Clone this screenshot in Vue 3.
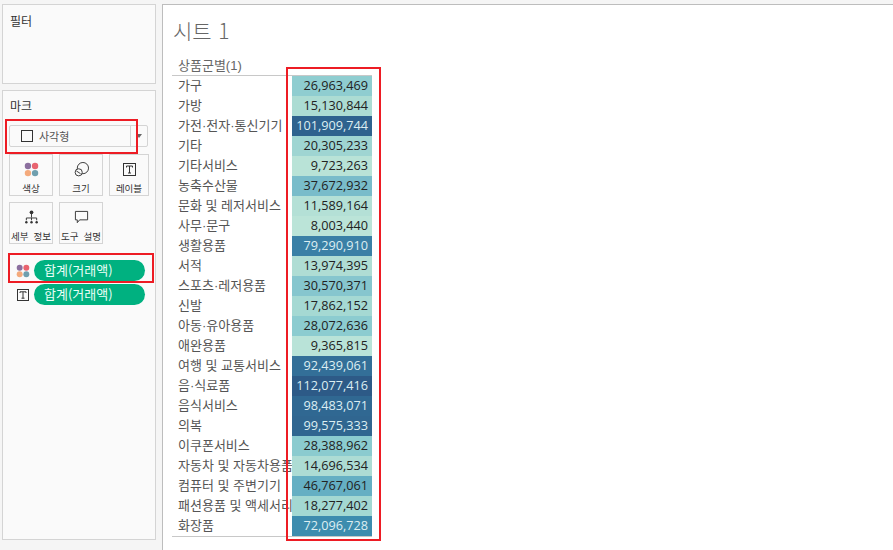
<template>
  <div class="page">
    <aside class="side">
      <section class="card filter">
        <div class="card-title">필터</div>
      </section>
      <section class="card marks">
        <div class="card-title">마크</div>
        <div class="mark-select">
          <span class="select-box"><i class="square"></i>사각형</span>
          <span class="select-arrow"></span>
        </div>
        <div class="mark-grid">
          <div v-for="b in buttons" :key="b.label" class="mark-btn">
            <svg v-if="b.icon === 'color'" width="15" height="15" viewBox="0 0 16 16">
              <circle cx="4.2" cy="4.2" r="3.4" fill="#8b6f9e" />
              <circle cx="11.8" cy="4.2" r="3.4" fill="#e8636f" />
              <circle cx="4.2" cy="11.8" r="3.4" fill="#f4aa7c" />
              <circle cx="11.8" cy="11.8" r="3.4" fill="#6f9fae" />
            </svg>
            <svg v-else-if="b.icon === 'size'" width="15" height="15" viewBox="0 0 16 16" fill="none" stroke="#333" stroke-width="1">
              <circle cx="9.5" cy="6.5" r="6" />
              <circle cx="5" cy="11" r="3.8" fill="#fafafa" />
              <path d="M2.5 9.5l4.5 3" />
            </svg>
            <svg v-else-if="b.icon === 'label'" width="15" height="15" viewBox="0 0 15 15" fill="none" stroke="#333">
              <rect x="1.5" y="1.5" width="12" height="12" />
              <path d="M4.5 5.5v-1.5h6v1.5M7.5 4v7M6 11h3" />
            </svg>
            <svg v-else-if="b.icon === 'detail'" width="15" height="15" viewBox="0 0 16 16" fill="none" stroke="#333">
              <circle cx="8" cy="2.5" r="2" fill="#333" stroke="none" />
              <path d="M8 4v4M2.5 11V8.5h11V11M8 8.5V11" />
              <circle cx="2.5" cy="13" r="1.3" fill="#333" stroke="none" />
              <circle cx="8" cy="13" r="1.3" fill="#333" stroke="none" />
              <circle cx="13.5" cy="13" r="1.3" fill="#333" stroke="none" />
            </svg>
            <svg v-else width="15" height="15" viewBox="0 0 16 16" fill="none" stroke="#333">
              <path d="M1.5 1.5h13v9H6l-2.5 3v-3h-2z" />
            </svg>
            <span class="btn-label">{{ b.label }}</span>
          </div>
        </div>
        <div class="pill-row first">
          <svg width="14" height="14" viewBox="0 0 16 16">
            <circle cx="4.2" cy="4.2" r="3.4" fill="#8b6f9e" />
            <circle cx="11.8" cy="4.2" r="3.4" fill="#e8636f" />
            <circle cx="4.2" cy="11.8" r="3.4" fill="#f4aa7c" />
            <circle cx="11.8" cy="11.8" r="3.4" fill="#6f9fae" />
          </svg>
          <span class="pill">합계(거래액)</span>
        </div>
        <div class="pill-row">
          <svg width="14" height="14" viewBox="0 0 14 14" fill="none" stroke="#333">
            <rect x="1.5" y="1.5" width="11" height="11" />
            <path d="M4 5V3.8h6V5M7 3.8v6.4M5.5 10.2h3" />
          </svg>
          <span class="pill">합계(거래액)</span>
        </div>
      </section>
    </aside>

    <main class="sheet">
      <h1 class="sheet-title">시트 1</h1>
      <div class="table">
        <div class="table-head">상품군별(1)</div>
        <div v-for="r in rows" :key="r[0]" class="row">
          <span class="name">{{ r[0] }}</span>
          <span class="value" :class="{ light: r[3] }" :style="{ background: r[2] }">{{ r[1] }}</span>
        </div>
      </div>
    </main>

    <div class="red box-a"></div>
    <div class="red box-b"></div>
    <div class="red box-c"></div>
  </div>
</template>

<script setup>
const buttons = [
  { label: '색상', icon: 'color' },
  { label: '크기', icon: 'size' },
  { label: '레이블', icon: 'label' },
  { label: '세부 정보', icon: 'detail' },
  { label: '도구 설명', icon: 'tip' }
]

// 이름, 값, 배경색, 밝은 글자 여부
const rows = [
  ['가구', '26,963,469', '#8fcdd0', false],
  ['가방', '15,130,844', '#acdcd3', false],
  ['가전·전자·통신기기', '101,909,744', '#2e628e', true],
  ['기타', '20,305,233', '#9fd5d2', false],
  ['기타서비스', '9,723,263', '#b9e3d7', false],
  ['농축수산물', '37,672,932', '#79bcca', false],
  ['문화 및 레저서비스', '11,589,164', '#b4e0d6', false],
  ['사무·문구', '8,003,440', '#bbe4d8', false],
  ['생활용품', '79,290,910', '#3a80a6', true],
  ['서적', '13,974,395', '#afddd4', false],
  ['스포츠·레저용품', '30,570,371', '#86c6ce', false],
  ['신발', '17,862,152', '#a5d9d3', false],
  ['아동·유아용품', '28,072,636', '#8cccd0', false],
  ['애완용품', '9,365,815', '#b9e3d8', false],
  ['여행 및 교통서비스', '92,439,061', '#336f98', true],
  ['음·식료품', '112,077,416', '#2d5a87', true],
  ['음식서비스', '98,483,071', '#306892', true],
  ['의복', '99,575,333', '#306690', true],
  ['이쿠폰서비스', '28,388,962', '#8bcbcf', false],
  ['자동차 및 자동차용품', '14,696,534', '#addcd4', false],
  ['컴퓨터 및 주변기기', '46,767,061', '#65afc3', false],
  ['패션용품 및 액세서리', '18,277,402', '#a3d8d2', false],
  ['화장품', '72,096,728', '#3d8cae', true]
]
</script>

<style>
html, body { background: #fff; }
</style>

<style scoped>
.page {
  position: relative;
  display: flex;
  width: 893px;
  height: 550px;
  overflow: hidden;
  background: #f5f5f5;
  font-family: "Noto Sans CJK KR", "Liberation Sans", sans-serif;
  color: #333;
}
.side {
  width: 156px;
  padding: 4px 0 0 2px;
  box-sizing: border-box;
  flex: none;
}
.card {
  background: #fafafa;
  border: 1px solid #d4d4d4;
  padding: 7px 6px;
  box-sizing: border-box;
  width: 154px;
}
.filter { height: 80px; margin-bottom: 6px; }
.marks { height: 450px; }
.card-title { font-size: 12px; line-height: 16px; color: #333; padding-left: 1px; }
.filter .card-title { margin-top: 1px; }
.mark-select {
  display: flex;
  width: 139px;
  height: 22px;
  margin-top: 11px;
  border: 1px solid #d4d4d4;
  border-radius: 2px;
  box-sizing: border-box;
}
.select-box {
  flex: 1;
  display: flex;
  align-items: center;
  gap: 6px;
  padding-left: 11px;
  font-size: 11px;
  color: #555;
  border-right: 1px solid #d4d4d4;
}
.square {
  width: 12px;
  height: 12px;
  box-sizing: border-box;
  border: 1px solid #333;
}
.select-arrow {
  width: 16px;
  position: relative;
}
.select-arrow::after {
  content: '';
  position: absolute;
  left: 5px;
  top: 8px;
  border: 3px solid transparent;
  border-top: 4px solid #666;
}
.mark-grid {
  display: grid;
  grid-template-columns: 44px 44px 40px;
  gap: 6px;
  margin-top: 7px;
}
.mark-btn {
  height: 42px;
  border: 1px solid #d4d4d4;
  box-sizing: border-box;
  background: #fafafa;
  display: flex;
  flex-direction: column;
  align-items: center;
  padding-top: 7px;
}
.btn-label {
  font-size: 9.5px;
  line-height: 14px;
  margin-top: 4px;
  white-space: nowrap;
  word-spacing: 3px;
  color: #333;
}
.pill-row {
  display: flex;
  align-items: center;
  gap: 4px;
  height: 21px;
  padding-left: 7px;
  margin-top: 3px;
}
.pill-row.first { margin-top: 16px; }
.pill {
  width: 111px;
  height: 21px;
  line-height: 19px;
  border-radius: 11px;
  background: #00b180;
  color: #eafff7;
  font-size: 13px;
  padding-left: 10px;
  box-sizing: border-box;
  flex: none;
}
.sheet {
  flex: 1;
  margin: 4px 0 0 6px;
  background: #fff;
  border-top: 1px solid #bdbdbd;
  border-left: 1px solid #bdbdbd;
  padding: 10px 0 0 9px;
  min-width: 0;
}
.sheet-title {
  margin: 0;
  font-size: 21px;
  line-height: 30px;
  font-weight: 300;
  color: #666;
  padding-left: 1px;
  word-spacing: 2px;
}
.table {
  width: 200px;
  margin-top: 11px;
  border-bottom: 1px solid #c8c8c8;
  font-family: "Liberation Sans", "Noto Sans CJK KR", sans-serif;
  font-size: 13px;
}
.table-head {
  height: 20px;
  line-height: 19px;
  padding-left: 6px;
  border-bottom: 1px solid #c8c8c8;
  box-sizing: border-box;
  color: #666;
}
.row {
  display: flex;
  justify-content: space-between;
  height: 20px;
  line-height: 20px;
  padding-left: 6px;
}
.name { white-space: nowrap; width: 114px; color: #555; }
.value {
  width: 80px;
  flex: none;
  position: relative;
  text-align: right;
  padding-right: 4px;
  box-sizing: border-box;
  font-family: "Open Sans", "Liberation Sans", sans-serif;
  font-size: 12.7px;
  line-height: 19px;
  color: #222;
}
.value.light { color: #dceef2; }
.red { position: absolute; border: 2px solid #ed1c24; box-sizing: border-box; }
.box-a { left: 5px; top: 119px; width: 133px; height: 35px; }
.box-b { left: 8px; top: 253px; width: 146px; height: 30px; }
.box-c { left: 286px; top: 67px; width: 95px; height: 474px; }
</style>
